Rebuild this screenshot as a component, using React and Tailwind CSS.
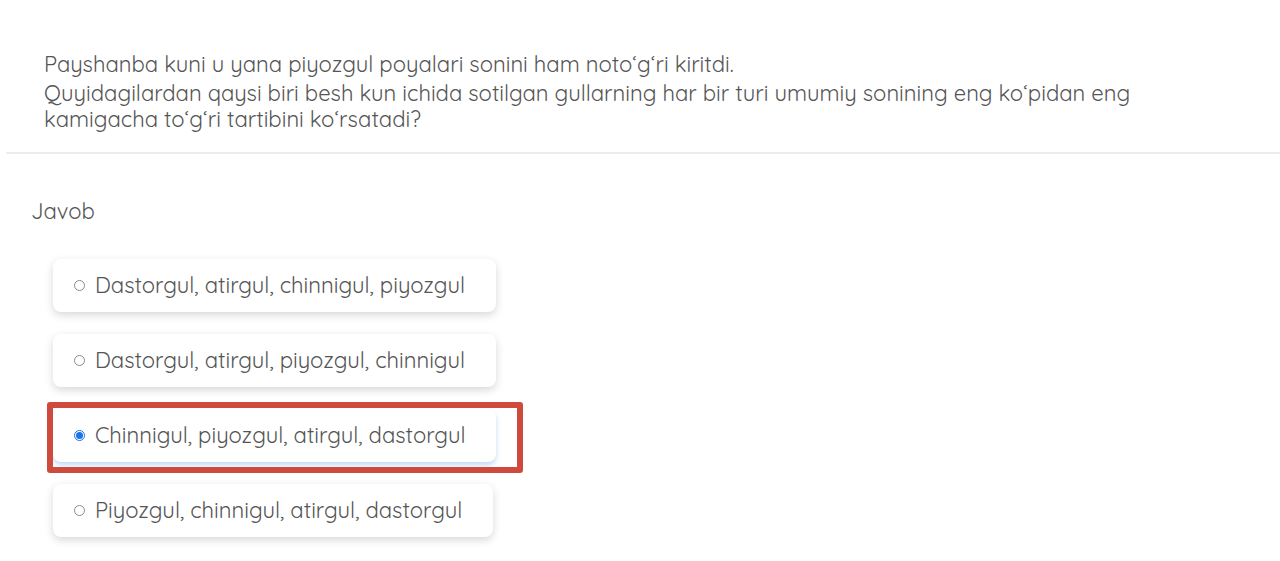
const options = [
  { text: 'Dastorgul, atirgul, chinnigul, piyozgul', checked: false },
  { text: 'Dastorgul, atirgul, piyozgul, chinnigul', checked: false },
  { text: 'Chinnigul, piyozgul, atirgul, dastorgul', checked: true, marked: true },
  { text: 'Piyozgul, chinnigul, atirgul, dastorgul', checked: false },
];

function Radio({ checked }) {
  if (checked) {
    return (
      <span className="flex h-[11px] w-[11px] shrink-0 items-center justify-center rounded-full border border-[#1a73e8] bg-white">
        <span className="h-[7px] w-[7px] rounded-full bg-[#1a73e8]" />
      </span>
    );
  }
  return <span className="h-[11px] w-[11px] shrink-0 rounded-full border border-[#8a8a8a] bg-white" />;
}

function Option({ text, checked, marked }) {
  return (
    <div className="relative">
      {marked && (
        <div className="pointer-events-none absolute -top-[7px] -left-[6px] -right-[27px] -bottom-[11px] rounded-[3px] border-[6px] border-[#cd4a3d]" />
      )}
      <label
        className={`flex h-[53px] items-center gap-[10px] rounded-[8px] bg-white pl-[21px] pr-[31px] ${
          checked
            ? 'shadow-[0_3px_5px_rgba(120,170,240,0.45)]'
            : 'shadow-[0_3px_8px_rgba(0,0,0,0.16)]'
        }`}
      >
        <Radio checked={checked} />
        <span className="text-[22px] text-[#555]">{text}</span>
      </label>
    </div>
  );
}

export default function App() {
  return (
    <div className="min-h-[561px] overflow-hidden bg-white font-['Quicksand','Lato',sans-serif] text-[#555]">
      <div className="pl-[44px] pr-[136px] pt-[51px] text-[22px] leading-[26px]">
        <p>Payshanba kuni u yana piyozgul poyalari sonini ham noto‘g‘ri kiritdi.</p>
        <p className="mt-[3px]">
          Quyidagilardan qaysi biri besh kun ichida sotilgan gullarning har bir turi umumiy sonining eng ko‘pidan eng
          kamigacha to‘g‘ri tartibini ko‘rsatadi?
        </p>
      </div>

      <div className="ml-[6px] mt-[20px] h-[2px] bg-[#ececec]" />

      <div className="pl-[31px] pt-[44px] text-[22px] leading-[26px]">Javob</div>

      <div className="mt-[35px] flex flex-col items-start gap-[22px] pl-[53px]">
        {options.map((o) => (
          <Option key={o.text} {...o} />
        ))}
      </div>
    </div>
  );
}
